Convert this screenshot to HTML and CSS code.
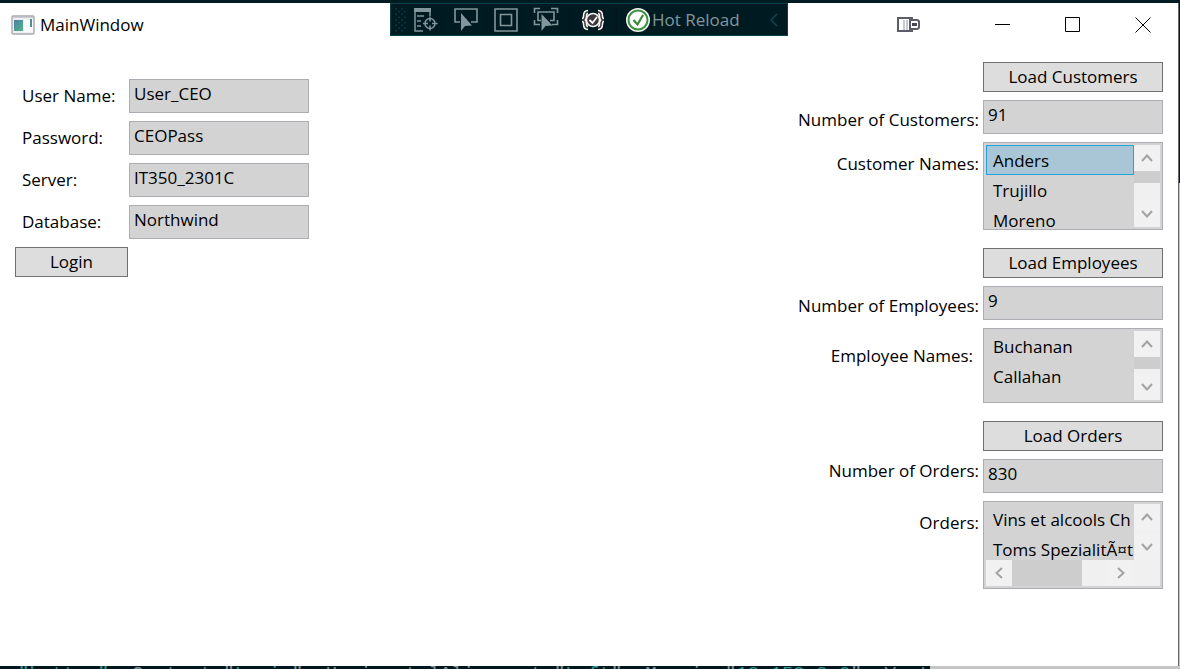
FILE: index.html
```html
<!DOCTYPE html>
<html lang="en">
<head>
<meta charset="utf-8">
<title>MainWindow</title>
<link rel="stylesheet" href="styles.css">
</head>
<body>
<div class="desktop">
  <div class="window">
    <header class="titlebar">
      <svg class="app-icon" width="24" height="20" viewBox="0 0 24 20"><rect x="1" y="1" width="22" height="18" rx="1" fill="#eeeff3" stroke="#a9a9b3" stroke-width="1.4"/><path d="M2 2.5h20" stroke="#c9c9d2"/><defs><linearGradient id="pane" x2="1" y2="1"><stop stop-color="#4a7fa8"/><stop offset="1" stop-color="#55b487"/></linearGradient></defs><rect x="3" y="5" width="9" height="11" fill="url(#pane)"/><rect x="13" y="5" width="9" height="12" fill="#fafafa"/><path d="M20 4v8" stroke="#508d92" stroke-width="2"/></svg>
      <h1 class="title">MainWindow</h1>
      <svg class="display-icon" width="26" height="18" viewBox="0 0 26 18"><g fill="none" stroke="#5c5c6b" stroke-width="2"><path d="M17 4V2H3v13h14v-2"/><path d="M15 4h6.500q2.500 0 2.500 2v5q0 2-2.500 2H15z" fill="#fff"/></g><path d="M9 4v10M12 4v10" stroke="#b5b5bd" stroke-width="1.500"/><rect x="17" y="7" width="5" height="3" fill="#454553"/></svg>
      <div class="captions">
        <button class="caption" aria-label="Minimize"><svg width="16" height="16" viewBox="0 0 16 16"><path d="M0 7.500h15"/></svg></button>
        <button class="caption" aria-label="Maximize"><svg width="16" height="16" viewBox="0 0 16 16"><path d="M.5.5h14v14H.5z"/></svg></button>
        <button class="caption" aria-label="Close"><svg width="16" height="16" viewBox="0 0 16 16"><path d="M.5.5l15 15M15.500.5l-15 15"/></svg></button>
      </div>
    </header>

    <div class="debugbar" role="toolbar" aria-label="Debug tools">
      <svg class="grip" width="12" height="26" viewBox="0 0 12 26"><g stroke="#0b4148" stroke-width="1.5" stroke-dasharray="1.500 4"><path d="M2 1v24M8 1v24"/><path d="M5 4v21M11 4v21"/></g></svg>
      <button class="tool" aria-label="Live Visual Tree"><svg width="26" height="26" viewBox="0 0 26 26"><path d="M1 1h17v4H1z" fill="#82969b"/><g fill="none" stroke="#82969b" stroke-width="1.500"><path d="M2 4v20h8M4 9h7M4 14h4M4 19h4M17 5v4"/><circle cx="17" cy="16.500" r="5"/><path d="M17 9.500v5M17 18.500v5M10 16.500h5M19 16.500h5.500"/></g></svg></button>
      <button class="tool" aria-label="Select Element"><svg width="26" height="26" viewBox="0 0 26 26"><path d="M7 15H2V2h22v13h-6" fill="none" stroke="#82969b" stroke-width="1.600"/><path d="M8 6v18l4-5 7-.5z" fill="#82969b"/></svg></button>
      <button class="tool" aria-label="Display Layout Adorners"><svg width="26" height="26" viewBox="0 0 26 26"><g fill="none" stroke="#82969b" stroke-width="1.600"><path d="M2 2h22v22H2zM7.500 7.500h11v11h-11z"/></g></svg></button>
      <button class="tool" aria-label="Track Focused Element"><svg width="26" height="26" viewBox="0 0 26 26"><path d="M1.500 6V1.500H7M18 1.500h6.500V6M1.500 13v4.500H7M24.500 13v4.500H19M8 13.500H5V5h16v8.500h-4" fill="none" stroke="#82969b" stroke-width="1.600"/><path d="M8.500 7v17l4-5 7-.5z" fill="#82969b"/></svg></button>
      <span class="divider"></span>
      <button class="tool" aria-label="Scan Accessibility"><svg width="26" height="26" viewBox="0 0 26 26"><path d="M8 5Q5 5 5 9q0 4-3 4 3 0 3 4t3 4M18 5q3 0 3 4t3 4q-3 0-3 4t-3 4" fill="none" stroke="#f4f4f4" stroke-width="4.500"/><path d="M8 5Q5 5 5 9q0 4-3 4 3 0 3 4t3 4M18 5q3 0 3 4t3 4q-3 0-3 4t-3 4" fill="none" stroke="#3d3539" stroke-width="1.500"/><circle cx="13" cy="13" r="6.500" fill="#3d3539" stroke="#f4f4f4" stroke-width="1.500"/><path d="M9.500 13l3 3 4.500-6" fill="none" stroke="#fff" stroke-width="1.800"/></svg></button>
      <span class="divider"></span>
      <button class="reload"><svg width="24" height="24" viewBox="0 0 24 24"><circle cx="12" cy="12" r="12" fill="#f1f6ef"/><circle cx="12" cy="12" r="9.500" fill="#fff" stroke="#3c9140" stroke-width="2"/><path d="M7.500 12l4 4.500L17 7" fill="none" stroke="#388a34" stroke-width="2.200"/></svg><span>Hot Reload</span></button>
      <button class="collapse" aria-label="Collapse"><svg width="9" height="14" viewBox="0 0 9 14"><path d="M8 1L2 7l6 6" fill="none" stroke="#0c4850" stroke-width="1.500"/></svg></button>
    </div>

    <main class="content">
      <form class="login" onsubmit="return false">
        <label for="user">User Name:</label><input class="field" id="user" type="text" value="User_CEO">
        <label for="pass">Password:</label><input class="field" id="pass" type="text" value="CEOPass">
        <label for="server">Server:</label><input class="field" id="server" type="text" value="IT350_2301C">
        <label for="db">Database:</label><input class="field" id="db" type="text" value="Northwind">
        <button class="button login-button">Login</button>
      </form>

      <div class="queries">
        <section class="query">
          <button class="button load">Load Customers</button>
          <label class="lowered" for="customers">Number of Customers:</label><input class="field" id="customers" type="text" value="91">
          <span class="list-label" id="customer-names">Customer Names:</span>
          <div class="listbox">
            <ul class="items" role="listbox" aria-labelledby="customer-names"><li class="selected" role="option" aria-selected="true">Anders</li><li role="option">Trujillo</li><li role="option">Moreno</li></ul>
            <div class="vscroll"><button class="arrow" aria-label="Scroll up"><svg width="14" height="10" viewBox="0 0 14 10"><path d="M2 8l5-5.500L12 8"/></svg></button><span class="thumb"></span><span class="track"></span><button class="arrow" aria-label="Scroll down"><svg width="14" height="10" viewBox="0 0 14 10"><path d="M2 2l5 5.500L12 2"/></svg></button></div>
          </div>
        </section>

        <section class="query">
          <button class="button load">Load Employees</button>
          <label class="lowered" for="employees">Number of Employees:</label><input class="field" id="employees" type="text" value="9">
          <span class="list-label inset" id="employee-names">Employee Names:</span>
          <div class="listbox short">
            <ul class="items" role="listbox" aria-labelledby="employee-names"><li role="option">Buchanan</li><li role="option">Callahan</li><li role="option">Davolio</li></ul>
            <div class="vscroll"><button class="arrow" aria-label="Scroll up"><svg width="14" height="10" viewBox="0 0 14 10"><path d="M2 8l5-5.500L12 8"/></svg></button><span class="thumb"></span><span class="track"></span><button class="arrow" aria-label="Scroll down"><svg width="14" height="10" viewBox="0 0 14 10"><path d="M2 2l5 5.500L12 2"/></svg></button></div>
          </div>
        </section>

        <section class="query">
          <button class="button load">Load Orders</button>
          <label for="orders">Number of Orders:</label><input class="field" id="orders" type="text" value="830">
          <span class="list-label" id="order-names">Orders:</span>
          <div class="listbox both">
            <ul class="items" role="listbox" aria-labelledby="order-names"><li role="option">Vins et alcools Ch</li><li role="option">Toms SpezialitÃ¤t</li></ul>
            <div class="vscroll"><button class="arrow" aria-label="Scroll up"><svg width="14" height="10" viewBox="0 0 14 10"><path d="M2 8l5-5.500L12 8"/></svg></button><span class="track"></span><button class="arrow" aria-label="Scroll down"><svg width="14" height="10" viewBox="0 0 14 10"><path d="M2 2l5 5.500L12 2"/></svg></button></div>
            <div class="hscroll"><button class="arrow" aria-label="Scroll left"><svg width="10" height="14" viewBox="0 0 10 14"><path d="M8 2L2.500 7 8 12"/></svg></button><span class="thumb"></span><span class="track"></span><button class="arrow" aria-label="Scroll right"><svg width="10" height="14" viewBox="0 0 10 14"><path d="M2 2l5.500 5L2 12"/></svg></button></div>
            <span class="corner"></span>
          </div>
        </section>
      </div>
    </main>
  </div>
  <div class="side"></div>
  <div class="editor"><code class="code"><b>"button"</b>  Content="<b>Login</b>"  HorizontalAlignment="<b>Left</b>"  Margin="<b>10,158,0,0</b>"  Vert</code><span class="panel"></span></div>
</div>
</body>
</html>
```
FILE: styles.css
```css
* { box-sizing: border-box; }

body {
  margin: 0;
  background: #001c22;
  color: #000;
  font: 17px/24px "Open Sans", "Noto Sans", sans-serif;
}

button, input { font: inherit; color: inherit; margin: 0; border-radius: 0; }
svg { display: block; flex: none; }

.desktop {
  display: grid;
  grid-template-columns: 1fr 2px;
  grid-template-rows: 1fr 3px;
  height: 100vh;
  padding-top: 3px;
  overflow: hidden;
}

.window {
  position: relative;
  display: flex;
  flex-direction: column;
  background: #fff;
}

.side {
  border-left: 1px solid #666;
  background: linear-gradient(#001c22 180px, #c4c4c8 180px);
}

.editor {
  grid-column: 1 / -1;
  display: flex;
  overflow: hidden;
  background: #001720;
}

.code {
  flex: 1;
  padding-left: 18px;
  height: 22px;
  overflow: hidden;
  white-space: pre;
  color: #839496;
  font: 19px/16px "Liberation Mono", monospace;
}

.code b { font-weight: normal; color: #2aa198; }
.panel { width: 250px; background: #c5c5c5; }

.titlebar {
  display: flex;
  align-items: center;
  height: 43px;
  padding-left: 11px;
}

.title { flex: 1; margin: 0 0 0 5px; font-size: 17px; font-weight: 400; }
.display-icon { margin-right: 47px; }
.captions { display: flex; }

.caption {
  display: grid;
  place-items: center;
  width: 70px;
  height: 43px;
  padding: 0;
  border: 0;
  background: none;
}

.caption path { fill: none; stroke: #000; stroke-width: 1; }

.debugbar {
  position: absolute;
  top: 0;
  left: 50%;
  transform: translateX(-50%);
  display: flex;
  align-items: center;
  width: 398px;
  height: 33px;
  padding: 0 9px 0 3px;
  border: 1px solid #07444a;
  background: #001a22;
  color: #82969b;
}

.debugbar button { padding: 0; border: 0; background: none; }
.debugbar .tool { display: grid; place-items: center; width: 40px; height: 30px; }
.divider { width: 1px; height: 26px; margin: 0 3px; background: #03141a; }
.debugbar .reload { display: flex; align-items: center; gap: 2px; flex: 1; margin-left: 6px; white-space: nowrap; }

.content {
  flex: 1;
  display: flex;
  justify-content: space-between;
  align-items: flex-start;
  padding: 16px 15px 0;
}

.login {
  display: grid;
  grid-template-columns: 106px 180px;
  gap: 8px;
  align-items: center;
  padding-top: 17px;
}

.login label { padding-left: 7px; }

.field {
  width: 180px;
  height: 34px;
  padding: 0 4px 6px;
  border: 1px solid #abadb3;
  background: #d3d3d3;
}

.button {
  height: 30px;
  padding: 0;
  border: 1px solid #707070;
  background: #ddd;
}

.login-button { width: 113px; }

.queries { display: grid; row-gap: 18px; }

.query {
  display: grid;
  grid-template-columns: 1fr 180px;
  gap: 8px 4px;
  align-items: start;
  text-align: right;
}

.load { grid-column: 2; }
.lowered { padding-top: 8px; }
.list-label { padding-top: 10px; }
.inset { padding-top: 16px; padding-right: 6px; }

.listbox {
  display: grid;
  grid-template-columns: 1fr 26px;
  grid-template-rows: minmax(0, 1fr);
  height: 88px;
  padding: 2px;
  border: 1px solid #abadb3;
  background: #d3d3d3;
  text-align: left;
}

.short { height: 75px; }
.both { grid-template-rows: minmax(0, 1fr) 26px; }

.items { margin: 0; padding: 0; list-style: none; overflow: hidden; white-space: nowrap; }
.items li { height: 30px; padding: 3px 6px 1px; border: 1px solid transparent; }
.items .selected { border-color: #26a0da; background: #a8c6d6; }

.vscroll, .hscroll { display: flex; min-height: 0; background: #f0f0f0; }
.vscroll { flex-direction: column; }

.arrow {
  display: grid;
  place-items: center;
  flex: 0 1 26px;
  min-height: 0;
  padding: 0;
  border: 0;
  background: #f1f1f1;
}

.arrow path { fill: none; stroke: #a3a3a3; stroke-width: 2; }
.track { flex: 1; }
.thumb { flex: none; height: 12px; background: #cdcdcd; }
.hscroll .thumb { width: 70px; height: 26px; }
.corner { background: #f0f0f0; }
```
